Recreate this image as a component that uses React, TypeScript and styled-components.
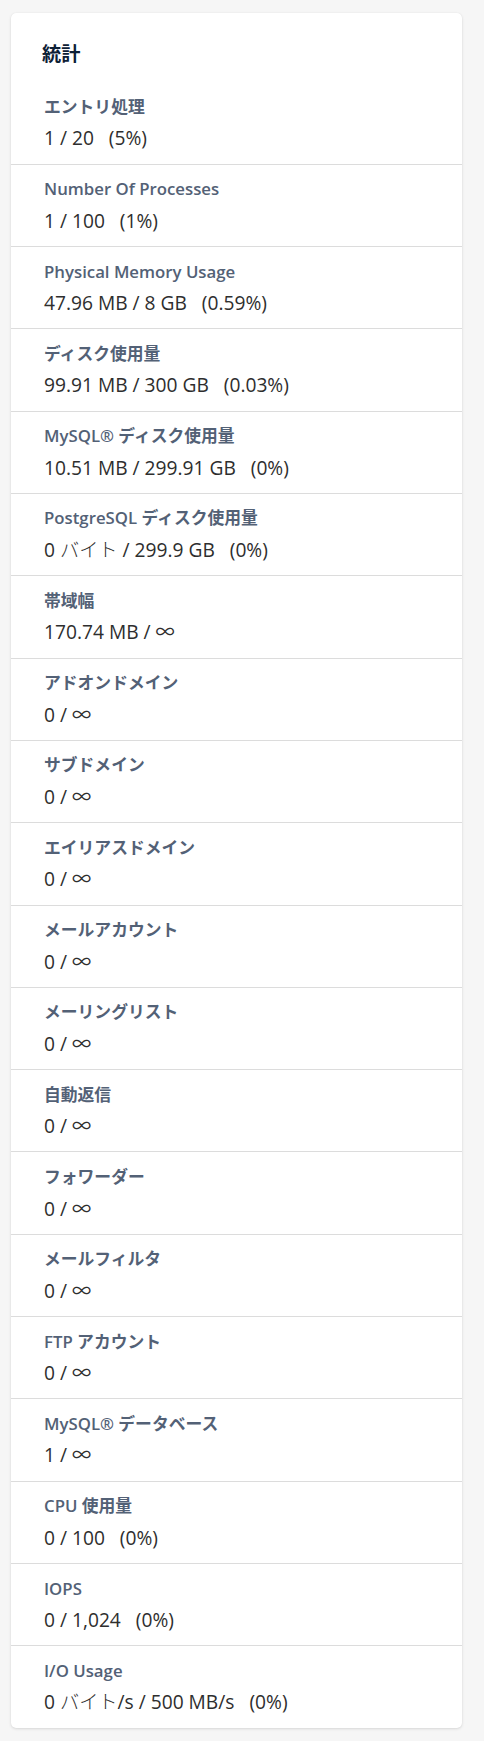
import React from "react";
import styled, { createGlobalStyle } from "styled-components";

const GlobalStyle = createGlobalStyle`
  html, body {
    margin: 0;
    padding: 0;
    background: #f6f6f6;
  }
  body {
    font-family: "Open Sans", "Noto Sans CJK JP", sans-serif;
    -webkit-font-smoothing: antialiased;
  }
`;

const Page = styled.div`
  padding: 13px 22px 12px 11px;
`;

const Card = styled.section`
  background: #ffffff;
  border-radius: 5px;
  box-shadow: 0 1px 3px rgba(0, 0, 0, 0.12), 0 0 1px rgba(0, 0, 0, 0.08);
  overflow: hidden;
`;

const Title = styled.h2`
  margin: 0;
  padding: 26.6px 33px 14px 31px;
  font-size: 19.2px;
  line-height: 28.8px;
  font-weight: 700;
  color: #0d2035;
`;

const List = styled.ul`
  list-style: none;
  margin: 0;
  padding: 0;
`;

const Row = styled.li<{ $first?: boolean }>`
  display: flex;
  flex-direction: column;
  gap: 5.4px;
  padding: 11.5px 33px 10.43px 33px;
  border-top: ${(p) => (p.$first ? "none" : "1px solid #dcdcdc")};
`;

const Label = styled.div`
  font-size: 16.8px;
  line-height: 25.2px;
  font-weight: 600;
  color: #536176;
`;

const Value = styled.div`
  font-size: 19.2px;
  line-height: 28.8px;
  font-weight: 400;
  color: #2e2e2e;
  white-space: pre;
`;

const Glyph = styled.span<{ $kind: "kana" | "inf" }>`
  font-family: "Noto Sans CJK JP", sans-serif;
  font-weight: ${(p) => (p.$kind === "kana" ? 300 : 400)};
  font-size: ${(p) => (p.$kind === "inf" ? "19.2px" : "19.2px")};
  line-height: 0;
`;

function renderValue(text: string) {
  const parts = text.split(/([\u30A0-\u30FF]+|∞)/);
  return parts.map((part, i) => {
    if (part === "∞") return <Glyph key={i} $kind="inf">∞</Glyph>;
    if (/^[\u30A0-\u30FF]+$/.test(part)) return <Glyph key={i} $kind="kana">{part}</Glyph>;
    return <React.Fragment key={i}>{part}</React.Fragment>;
  });
}

const stats: [string, string][] = [
  ["エントリ処理", "1 / 20   (5%)"],
  ["Number Of Processes", "1 / 100   (1%)"],
  ["Physical Memory Usage", "47.96 MB / 8 GB   (0.59%)"],
  ["ディスク使用量", "99.91 MB / 300 GB   (0.03%)"],
  ["MySQL® ディスク使用量", "10.51 MB / 299.91 GB   (0%)"],
  ["PostgreSQL ディスク使用量", "0 バイト / 299.9 GB   (0%)"],
  ["帯域幅", "170.74 MB / ∞"],
  ["アドオンドメイン", "0 / ∞"],
  ["サブドメイン", "0 / ∞"],
  ["エイリアスドメイン", "0 / ∞"],
  ["メールアカウント", "0 / ∞"],
  ["メーリングリスト", "0 / ∞"],
  ["自動返信", "0 / ∞"],
  ["フォワーダー", "0 / ∞"],
  ["メールフィルタ", "0 / ∞"],
  ["FTP アカウント", "0 / ∞"],
  ["MySQL® データベース", "1 / ∞"],
  ["CPU 使用量", "0 / 100   (0%)"],
  ["IOPS", "0 / 1,024   (0%)"],
  ["I/O Usage", "0 バイト/s / 500 MB/s   (0%)"],
];

export default function App() {
  return (
    <>
      <GlobalStyle />
      <Page>
        <Card>
          <Title>統計</Title>
          <List>
            {stats.map(([label, value], i) => (
              <Row key={label} $first={i === 0}>
                <Label>{label}</Label>
                <Value>{renderValue(value)}</Value>
              </Row>
            ))}
          </List>
        </Card>
      </Page>
    </>
  );
}
